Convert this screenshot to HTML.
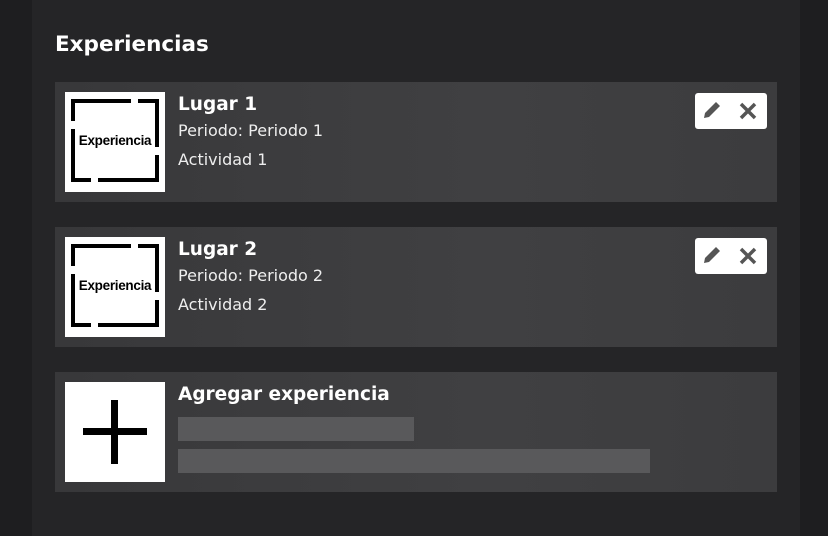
<!DOCTYPE html>
<html><head><meta charset="utf-8"><style>
body{margin:0;width:828px;height:536px;background:#1e1e20;font-family:"DejaVu Sans","Liberation Sans",sans-serif;overflow:hidden;position:relative}
.panel{position:absolute;left:32px;top:0;width:768px;height:536px;background:#252527}
h2{position:absolute;left:55px;top:32px;margin:0;color:#fff;font-size:21.5px;font-weight:bold}
.card{position:absolute;left:55px;width:722px;height:120px;background:linear-gradient(90deg,#38383a,#404042 60%,#3c3c3e)}
.img{position:absolute;left:10px;top:10px;width:100px;height:100px;background:#fff}
.t{position:absolute;left:123px;top:12px;color:#fff;font-weight:bold;font-size:18.5px}
.l1{position:absolute;left:123px;top:39px;color:#eee;font-size:16px}
.l2{position:absolute;left:123px;top:68px;color:#eee;font-size:16px}
.btn{position:absolute;left:640px;top:11px;width:72px;height:36px;background:#fff;border-radius:3px}
.bar{position:absolute;background:#59595b}
.lbl{position:absolute;left:0;width:100px;top:41px;text-align:center;font-family:"Liberation Sans",sans-serif;font-weight:bold;font-size:13.5px;letter-spacing:-0.3px;color:#000}
</style></head><body>
<div class="panel"></div>
<h2>Experiencias</h2>

<div class="card" style="top:82px">
<div class="img"><svg width="100" height="100"><g fill="#000"><rect x="6" y="7" width="60" height="4"/><rect x="73" y="7" width="21" height="4"/><rect x="6" y="7" width="4" height="22"/><rect x="6" y="37" width="4" height="50"/><rect x="90" y="7" width="4" height="48"/><rect x="90" y="63" width="4" height="27"/><rect x="6" y="86" width="20" height="4"/><rect x="33" y="86" width="61" height="4"/></g></svg><div class="lbl">Experiencia</div></div>
<div class="t">Lugar 1</div><div class="l1">Periodo: Periodo 1</div><div class="l2">Actividad 1</div>
<div class="btn"><svg width="72" height="36"><path d="M9 25 L10 20 L21 9 L25 13 L14 24 Z" fill="#555"/><path d="M46 11 L60 25 M60 11 L46 25" stroke="#555" stroke-width="3.5"/></svg></div>
</div>

<div class="card" style="top:227px">
<div class="img"><svg width="100" height="100"><g fill="#000"><rect x="6" y="7" width="60" height="4"/><rect x="73" y="7" width="21" height="4"/><rect x="6" y="7" width="4" height="22"/><rect x="6" y="37" width="4" height="50"/><rect x="90" y="7" width="4" height="48"/><rect x="90" y="63" width="4" height="27"/><rect x="6" y="86" width="20" height="4"/><rect x="33" y="86" width="61" height="4"/></g></svg><div class="lbl">Experiencia</div></div>
<div class="t">Lugar 2</div><div class="l1">Periodo: Periodo 2</div><div class="l2">Actividad 2</div>
<div class="btn"><svg width="72" height="36"><path d="M9 25 L10 20 L21 9 L25 13 L14 24 Z" fill="#555"/><path d="M46 11 L60 25 M60 11 L46 25" stroke="#555" stroke-width="3.5"/></svg></div>
</div>

<div class="card" style="top:372px">
<div class="img"><svg width="100" height="100"><rect x="46" y="18" width="7" height="64" fill="#000"/><rect x="18" y="46" width="64" height="7" fill="#000"/></svg></div>
<div class="t">Agregar experiencia</div>
<div class="bar" style="left:123px;top:45px;width:236px;height:24px"></div>
<div class="bar" style="left:123px;top:77px;width:472px;height:24px"></div>
</div>
</body></html>
